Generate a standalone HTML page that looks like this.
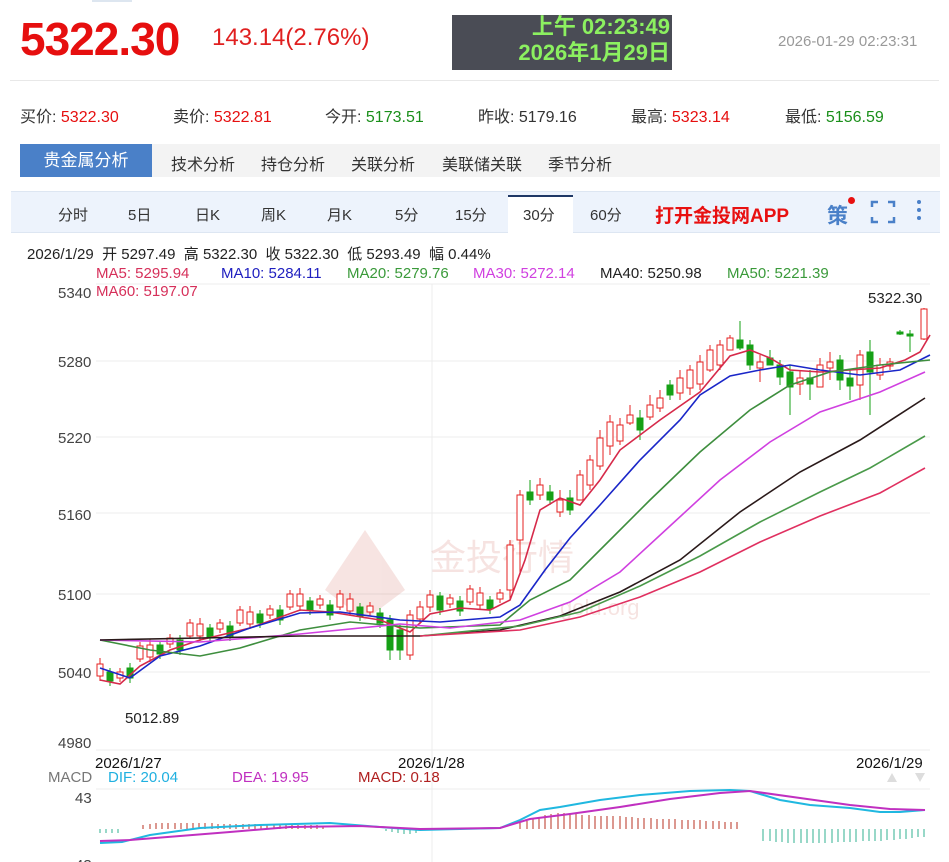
<!DOCTYPE html>
<html><head><meta charset="utf-8">
<style>
*{margin:0;padding:0;box-sizing:border-box}
body{width:949px;height:862px;overflow:hidden;background:#fff;font-family:"Liberation Sans","Noto Sans CJK SC",sans-serif;position:relative;color:#333}
.abs{position:absolute;white-space:nowrap}
.red{color:#e60f0f}.green{color:#1a8f1a}
</style></head><body>
<div class="abs" style="left:92px;top:0;width:40px;height:2px;background:#dde6f0"></div>
<div class="abs red" style="left:20px;top:12px;font-size:46px;font-weight:bold;letter-spacing:-1px">5322.30</div>
<div class="abs" style="left:212px;top:24px;font-size:24px;color:#e02020">143.14(2.76%)</div>
<div class="abs" style="left:452px;top:15px;width:220px;height:55px;background:#4a4c55"></div>
<div class="abs" style="left:452px;top:14px;width:220px;text-align:right;font-size:22px;line-height:26px;color:#8cf060;font-weight:bold;padding-right:2px">上午 02:23:49<br>2026年1月29日</div>
<div class="abs" style="left:778px;top:33px;font-size:15px;color:#999">2026-01-29 02:23:31</div>
<div class="abs" style="left:10px;top:80px;width:929px;height:1px;background:#e8e8e8"></div>
<div class="abs" style="left:20px;top:103px;font-size:16px">买价: <span class="red">5322.30</span></div>
<div class="abs" style="left:173px;top:103px;font-size:16px">卖价: <span class="red">5322.81</span></div>
<div class="abs" style="left:325px;top:103px;font-size:16px">今开: <span class="green">5173.51</span></div>
<div class="abs" style="left:478px;top:103px;font-size:16px">昨收: 5179.16</div>
<div class="abs" style="left:631px;top:103px;font-size:16px">最高: <span class="red">5323.14</span></div>
<div class="abs" style="left:785px;top:103px;font-size:16px">最低: <span class="green">5156.59</span></div>
<div class="abs" style="left:20px;top:144px;width:920px;height:33px;background:#f3f3f3"></div>
<div class="abs" style="left:20px;top:144px;width:132px;height:33px;background:#4a80c8;color:#fff;font-size:17px;line-height:33px;text-align:center">贵金属分析</div>
<div class="abs" style="left:171px;top:151px;font-size:16px">技术分析</div>
<div class="abs" style="left:261px;top:151px;font-size:16px">持仓分析</div>
<div class="abs" style="left:351px;top:151px;font-size:16px">关联分析</div>
<div class="abs" style="left:442px;top:151px;font-size:16px">美联储关联</div>
<div class="abs" style="left:548px;top:151px;font-size:16px">季节分析</div>
<div class="abs" style="left:11px;top:191px;width:929px;height:42px;background:#edf3fc;border-top:1px solid #dde6f2;border-bottom:1px solid #dde6f2"></div>
<div class="abs" style="left:508px;top:195px;width:65px;height:38px;background:#fff;border-top:2px solid #1f3866"></div>
<div class="abs" style="top:204px;font-size:15px;color:#333;left:0">
<span class="abs" style="left:58px">分时</span><span class="abs" style="left:128px">5日</span><span class="abs" style="left:195px">日K</span><span class="abs" style="left:261px">周K</span><span class="abs" style="left:327px">月K</span><span class="abs" style="left:395px">5分</span><span class="abs" style="left:455px">15分</span><span class="abs" style="left:523px">30分</span><span class="abs" style="left:590px">60分</span></div>
<div class="abs" style="left:655px;top:201px;font-size:19px;font-weight:bold;color:#e81010">打开金投网APP</div>
<div class="abs" style="left:827px;top:200px;font-size:21px;color:#4a80c8;font-weight:bold">策</div>
<div class="abs" style="left:848px;top:197px;width:7px;height:7px;border-radius:50%;background:#e81010"></div>
<svg class="abs" style="left:870px;top:200px" width="26" height="24"><path d="M2 7V2h6M18 2h6v5M24 17v5h-6M8 22H2v-5" stroke="#4a80c8" stroke-width="2.5" fill="none"/></svg>
<svg class="abs" style="left:914px;top:199px" width="10" height="24"><circle cx="5" cy="3" r="2" fill="#4a80c8"/><circle cx="5" cy="11" r="2" fill="#4a80c8"/><circle cx="5" cy="19" r="2" fill="#4a80c8"/></svg>
<div class="abs" style="left:27px;top:243px;font-size:15px;color:#222">2026/1/29&nbsp; 开 5297.49&nbsp; 高 5322.30&nbsp; 收 5322.30&nbsp; 低 5293.49&nbsp; 幅 0.44%</div>
<div class="abs" style="top:265px;font-size:15px;left:0">
<span class="abs" style="left:96px;color:#d6305a">MA5: 5295.94</span><span class="abs" style="left:221px;color:#2020c0">MA10: 5284.11</span><span class="abs" style="left:347px;color:#3a9a3a">MA20: 5279.76</span><span class="abs" style="left:473px;color:#d040e0">MA30: 5272.14</span><span class="abs" style="left:600px;color:#222">MA40: 5250.98</span><span class="abs" style="left:727px;color:#3a9a3a">MA50: 5221.39</span></div>
<div class="abs" style="left:96px;top:283px;font-size:15px;color:#d6305a">MA60: 5197.07</div>
<svg class="abs" style="left:0;top:0" width="949" height="862">
<g stroke="#ececec" stroke-width="1">
<line x1="96" y1="284" x2="930" y2="284"/><line x1="96" y1="361" x2="930" y2="361"/><line x1="96" y1="437" x2="930" y2="437"/><line x1="96" y1="513" x2="930" y2="513"/><line x1="96" y1="594" x2="930" y2="594"/><line x1="96" y1="672" x2="930" y2="672"/><line x1="96" y1="750" x2="930" y2="750"/>
<line x1="432" y1="284" x2="432" y2="862"/><line x1="96" y1="789" x2="930" y2="789"/>
</g>
<g font-family="Liberation Sans" font-size="15" fill="#444">
<text x="58" y="298">5340</text><text x="58" y="367">5280</text><text x="58" y="443">5220</text><text x="58" y="520">5160</text><text x="58" y="600">5100</text><text x="58" y="678">5040</text><text x="58" y="748">4980</text>
<text x="868" y="303" fill="#222">5322.30</text><text x="125" y="723" fill="#222">5012.89</text>
<text x="95" y="768" fill="#111">2026/1/27</text><text x="398" y="768" fill="#111">2026/1/28</text><text x="856" y="768" fill="#111">2026/1/29</text>
<text x="48" y="782" fill="#777">MACD</text><text x="108" y="782" fill="#20b0e0">DIF: 20.04</text><text x="232" y="782" fill="#c030c0">DEA: 19.95</text><text x="358" y="782" fill="#b02020">MACD: 0.18</text>
<text x="75" y="803">43</text><text x="75" y="870">43</text>
</g>
<path d="M887 782l5-9 5 9zM915 773l5 9 5-9z" fill="#ddd"/>
<g opacity="0.13" fill="#c03020"><path d="M325 590l40-60 40 60-40 30z"/><text x="430" y="570" font-size="36" font-family="Noto Sans CJK SC">金投行情</text><text x="560" y="615" font-size="22" font-family="Liberation Sans">gold.org</text></g>
<!-- red candles -->
<g stroke="#e62020" fill="none">
<path d="M100 658V681M120 668V682M140 642V662M150 639V662M170 634V648M190 619V639M200 618V641M220 619V633M240 606V626M250 606V629M270 605V619M290 590V610M300 588V611M320 595V609M340 590V610M350 593V616M370 602V616M410 610V660M420 601V624M430 590V612M450 594V608M470 585V605M480 587V610M500 589V603M510 540V600M520 490V575M540 478V500M560 490V517M580 470V500M590 455V490M600 430V470M610 415V455M620 418V445M630 405V425M650 395V420M660 390V412M680 370V400M690 365V395M700 355V390M710 345V372M720 340V370M730 335V350M760 355V382M800 370V395M820 358V387M830 352V380M860 350V400M880 358V380M890 358V370M924 308V340"/>
</g>
<g stroke="#e62020" fill="#fff">
<rect x="97" y="664" width="6" height="12"/><rect x="117" y="672" width="6" height="6"/><rect x="137" y="646" width="6" height="13"/><rect x="147" y="645" width="6" height="12"/><rect x="167" y="638" width="6" height="6"/><rect x="187" y="623" width="6" height="13"/><rect x="197" y="624" width="6" height="12"/><rect x="217" y="623" width="6" height="6"/><rect x="237" y="610" width="6" height="13"/><rect x="247" y="612" width="6" height="12"/><rect x="267" y="609" width="6" height="6"/><rect x="287" y="594" width="6" height="13"/><rect x="297" y="594" width="6" height="12"/><rect x="317" y="599" width="6" height="6"/><rect x="337" y="594" width="6" height="13"/><rect x="347" y="599" width="6" height="12"/><rect x="367" y="606" width="6" height="6"/><rect x="407" y="615" width="6" height="40"/><rect x="417" y="607" width="6" height="12"/><rect x="427" y="595" width="6" height="12"/><rect x="447" y="598" width="6" height="6"/><rect x="467" y="589" width="6" height="13"/><rect x="477" y="593" width="6" height="12"/><rect x="497" y="593" width="6" height="6"/><rect x="507" y="545" width="6" height="45"/><rect x="517" y="495" width="6" height="45"/><rect x="537" y="485" width="6" height="10"/><rect x="557" y="500" width="6" height="12"/><rect x="577" y="475" width="6" height="25"/><rect x="587" y="460" width="6" height="25"/><rect x="597" y="438" width="6" height="28"/><rect x="607" y="422" width="6" height="24"/><rect x="617" y="425" width="6" height="16"/><rect x="627" y="415" width="6" height="8"/><rect x="647" y="405" width="6" height="12"/><rect x="657" y="398" width="6" height="10"/><rect x="677" y="378" width="6" height="15"/><rect x="687" y="370" width="6" height="18"/><rect x="697" y="362" width="6" height="22"/><rect x="707" y="350" width="6" height="20"/><rect x="717" y="345" width="6" height="20"/><rect x="727" y="338" width="6" height="12"/><rect x="757" y="362" width="6" height="6"/><rect x="797" y="378" width="6" height="6"/><rect x="817" y="365" width="6" height="22"/><rect x="827" y="362" width="6" height="6"/><rect x="857" y="355" width="6" height="30"/><rect x="877" y="365" width="6" height="10"/><rect x="887" y="362" width="6" height="4"/><rect x="921" y="309" width="6" height="30"/>
</g>
<!-- green candles -->
<g stroke="#16a016" fill="none">
<path d="M110 668V686M130 663V683M160 641V659M180 635V655M210 624V642M230 621V641M260 610V628M280 605V625M310 597V615M330 600V620M360 603V621M380 608V628M390 615V660M400 625V660M440 592V615M460 596V616M490 596V614M530 480V505M550 485V505M570 490V515M640 410V440M670 380V400M740 321V350M750 340V370M770 350V365M780 360V385M790 365V415M810 370V400M840 355V390M850 370V400M870 340V415M900 330V335M910 330V352"/>
</g>
<g stroke="#16a016" fill="#16a016">
<rect x="107" y="672" width="6" height="9"/><rect x="127" y="668" width="6" height="10"/><rect x="157" y="645" width="6" height="9"/><rect x="177" y="640" width="6" height="10"/><rect x="207" y="628" width="6" height="9"/><rect x="227" y="626" width="6" height="10"/><rect x="257" y="614" width="6" height="9"/><rect x="277" y="610" width="6" height="10"/><rect x="307" y="601" width="6" height="9"/><rect x="327" y="605" width="6" height="10"/><rect x="357" y="607" width="6" height="9"/><rect x="377" y="613" width="6" height="10"/><rect x="387" y="620" width="6" height="30"/><rect x="397" y="630" width="6" height="20"/><rect x="437" y="596" width="6" height="14"/><rect x="457" y="601" width="6" height="10"/><rect x="487" y="600" width="6" height="9"/><rect x="527" y="492" width="6" height="8"/><rect x="547" y="492" width="6" height="8"/><rect x="567" y="498" width="6" height="12"/><rect x="637" y="418" width="6" height="12"/><rect x="667" y="385" width="6" height="10"/><rect x="737" y="340" width="6" height="8"/><rect x="747" y="345" width="6" height="20"/><rect x="767" y="358" width="6" height="7"/><rect x="777" y="365" width="6" height="12"/><rect x="787" y="372" width="6" height="15"/><rect x="807" y="378" width="6" height="6"/><rect x="837" y="360" width="6" height="20"/><rect x="847" y="378" width="6" height="8"/><rect x="867" y="352" width="6" height="20"/><rect x="897" y="332" width="6" height="2"/><rect x="907" y="334" width="6" height="2"/>
</g>
<g fill="none" stroke-width="1.6">
<polyline stroke="#d62a4a" points="100,680 120,684 140,666 170,650 200,640 250,628 300,610 330,612 380,620 410,632 430,614 460,608 490,610 510,600 525,560 540,510 560,498 580,505 600,480 620,450 660,420 700,392 730,356 750,350 770,358 790,370 820,372 850,370 880,368 905,360 920,352 930,335"/>
<polyline stroke="#1a26c8" points="100,668 130,678 160,656 200,646 250,628 300,613 340,612 400,620 440,622 500,617 520,605 545,570 570,538 600,505 640,460 680,420 700,395 730,376 760,370 790,365 820,370 860,375 900,370 930,355"/>
<polyline stroke="#3e8e3e" points="100,640 150,650 200,656 240,648 300,630 350,622 420,628 500,625 530,600 570,580 610,540 650,500 700,452 750,410 790,385 830,372 880,365 930,360"/>
<polyline stroke="#d040e0" points="100,640 200,642 300,634 400,624 450,628 520,620 570,602 620,572 670,526 720,480 770,442 820,412 880,392 925,372"/>
<polyline stroke="#2a1a1a" points="100,640 200,638 300,636 420,636 500,630 560,616 620,592 680,560 740,512 800,472 860,440 925,398"/>
<polyline stroke="#4a9a4a" points="420,636 520,626 580,612 640,586 700,556 760,522 820,492 870,468 925,436"/>
<polyline stroke="#e03060" points="420,636 520,630 580,617 640,597 700,572 760,542 820,516 880,493 925,468"/>
</g>
<path stroke="#b83020" d="M143 829v-4M150 829v-5M156 829v-6M162 829v-6M168 829v-6M175 829v-6M181 829v-6M187 829v-6M193 829v-6M199 829v-6M205 829v-6M212 829v-6M218 829v-5M224 829v-5M230 829v-5M236 829v-5M243 829v-5M249 829v-5M255 829v-5M261 829v-5M267 829v-5M274 829v-5M280 829v-5M286 829v-5M292 829v-5M298 829v-4M305 829v-4M311 829v-4M317 829v-4M323 829v-3M520 829v-6M527 829v-8M533 829v-10M539 829v-12M545 829v-14M551 829v-15M558 829v-16M564 829v-16M570 829v-15M576 829v-15M582 829v-14M589 829v-14M595 829v-13M601 829v-13M607 829v-13M613 829v-13M620 829v-13M626 829v-12M632 829v-12M638 829v-11M644 829v-11M651 829v-11M657 829v-10M663 829v-10M669 829v-10M675 829v-10M682 829v-9M688 829v-9M694 829v-9M700 829v-9M706 829v-8M713 829v-8M719 829v-8M725 829v-7M731 829v-7M737 829v-7"/>
<path stroke="#30b090" d="M100 829v4M106 829v4M112 829v4M118 829v4M386 829v2M392 829v3M398 829v4M404 829v5M410 829v5M416 829v4M763 829v12M770 829v12M776 829v13M782 829v13M788 829v14M794 829v14M801 829v14M807 829v14M813 829v14M819 829v14M825 829v14M832 829v14M838 829v13M844 829v13M850 829v13M856 829v13M863 829v12M869 829v12M875 829v12M881 829v12M887 829v11M894 829v11M900 829v10M906 829v10M912 829v9M918 829v8M924 829v8"/>
<g fill="none" stroke-width="2">
<polyline stroke="#20b8e0" points="100,843 122,842 150,835 200,828 260,825 330,823 380,827 420,830 500,828 520,820 540,810 560,807 600,800 640,795 690,791 730,790 750,791 780,800 810,805 850,808 880,812 900,812 925,810"/>
<polyline stroke="#c030c0" points="100,841 130,840 180,836 230,832 290,827 360,826 420,829 500,828 530,819 570,814 620,807 670,799 720,793 750,791 800,798 850,805 890,809 925,810"/>
</g>
</svg>
</body></html>
